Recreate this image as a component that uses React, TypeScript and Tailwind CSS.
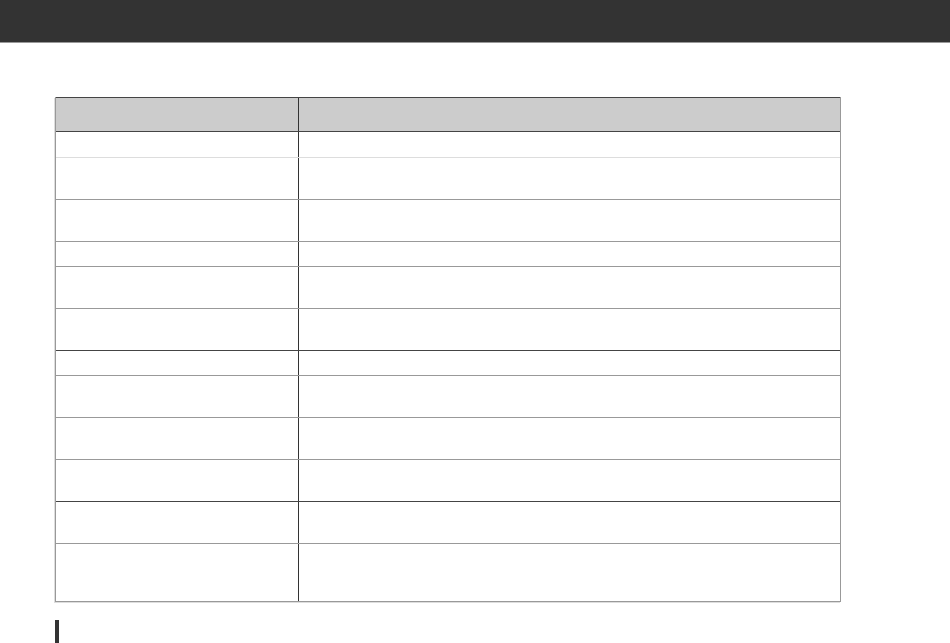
const rows: { h: string; line: string }[] = [
  { h: "h-[26px]", line: "border-[#444]" },
  { h: "h-[42px]", line: "border-[#ddd]" },
  { h: "h-[42px]", line: "border-[#999]" },
  { h: "h-[25px]", line: "border-[#999]" },
  { h: "h-[42px]", line: "border-[#999]" },
  { h: "h-[42px]", line: "border-[#999]" },
  { h: "h-[25px]", line: "border-[#444]" },
  { h: "h-[42px]", line: "border-[#999]" },
  { h: "h-[42px]", line: "border-[#999]" },
  { h: "h-[42px]", line: "border-[#999]" },
  { h: "h-[42px]", line: "border-[#444]" },
  { h: "h-[58px]", line: "border-[#999]" },
];

const App = () => {
  return (
    <div className="min-h-[643px] bg-white font-['Liberation_Sans',Arial,sans-serif] text-sm text-[#333] overflow-hidden">
      <header className="h-[43px] bg-[#333] border-b border-[#999]" />

      <main className="pl-[55px] pt-[54px]">
        <div className="w-[786px] border-l border-r border-b border-[#999] shadow-[-1px_1px_0_#ddd]">
          <div className="grid grid-cols-[243px_1fr] h-[34px] bg-[#ccc] border-t border-[#444]">
            <div className="border-r border-[#333]" />
            <div />
          </div>
          {rows.map((r, i) => (
            <div key={i} className={`grid grid-cols-[243px_1fr] border-t ${r.line} ${r.h}`}>
              <div className="border-r border-[#333]" />
              <div />
            </div>
          ))}
        </div>

        <div className="mt-[18px] h-[30px] w-[4px] bg-[#333]" />
      </main>
    </div>
  );
};

export default App;
